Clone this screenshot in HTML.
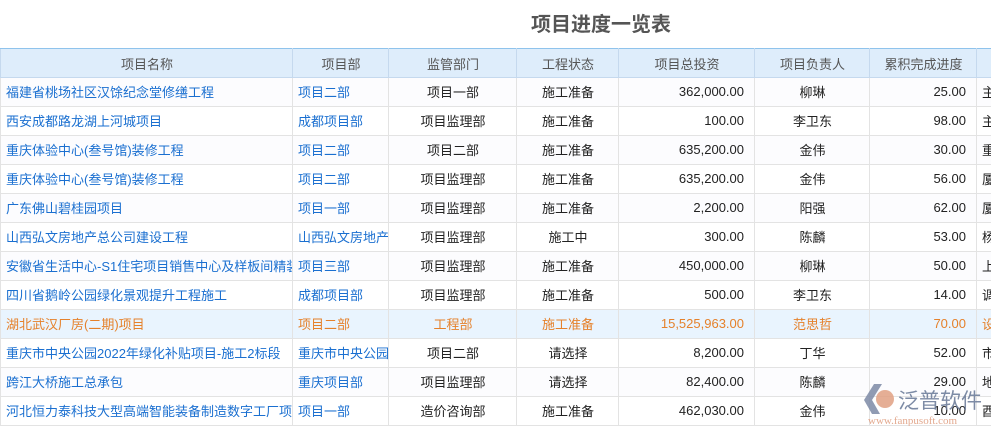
<!DOCTYPE html>
<html><head><meta charset="utf-8"><style>
body{margin:0;width:991px;height:427px;overflow:hidden;background:#fff;font-family:"Liberation Sans","Noto Sans CJK SC",sans-serif;position:relative}
.title{position:absolute;left:0;width:1202px;top:8px;text-align:center;font-size:20px;font-weight:bold;color:#555;font-family:"Noto Sans CJK SC",sans-serif}
table{position:absolute;left:0;top:48px;width:1016px;border-collapse:collapse;table-layout:fixed;font-size:13px;font-family:"Liberation Sans","Noto Sans CJK SC",sans-serif}
td,th{height:26px;border:1px solid #e3e3e3;padding:0 4px 2px 5px;white-space:nowrap;overflow:hidden;text-overflow:clip;color:#222}
th{height:28px;background:#deedfb;color:#555;font-weight:normal;border-color:#c5d9ee;border-top:1px solid #8fc3ec;padding-bottom:0}
td.l{color:#1a6fd0}
td.c{text-align:center}
td.r{text-align:right;padding-right:10px}
tr:nth-child(even) td{background:#fcfcfe}
tr.h td{background:#e9f4fe;color:#e5812b}
.wm{position:absolute;left:860px;top:378px}
</style></head><body>
<div class="title">项目进度一览表</div>
<table>
<colgroup><col style="width:292px"><col style="width:96px"><col style="width:128px"><col style="width:102px"><col style="width:136px"><col style="width:115px"><col style="width:107px"><col style="width:40px"></colgroup>
<tr><th>项目名称</th><th>项目部</th><th>监管部门</th><th>工程状态</th><th>项目总投资</th><th>项目负责人</th><th>累积完成进度</th><th></th></tr>
<tr><td class="l">福建省桃场社区汉馀纪念堂修缮工程</td><td class="l">项目二部</td><td class="c">项目一部</td><td class="c">施工准备</td><td class="r">362,000.00</td><td class="c">柳琳</td><td class="r">25.00</td><td>主</td></tr>
<tr><td class="l">西安成都路龙湖上河城项目</td><td class="l">成都项目部</td><td class="c">项目监理部</td><td class="c">施工准备</td><td class="r">100.00</td><td class="c">李卫东</td><td class="r">98.00</td><td>主</td></tr>
<tr><td class="l">重庆体验中心(叁号馆)装修工程</td><td class="l">项目二部</td><td class="c">项目二部</td><td class="c">施工准备</td><td class="r">635,200.00</td><td class="c">金伟</td><td class="r">30.00</td><td>重</td></tr>
<tr><td class="l">重庆体验中心(叁号馆)装修工程</td><td class="l">项目二部</td><td class="c">项目监理部</td><td class="c">施工准备</td><td class="r">635,200.00</td><td class="c">金伟</td><td class="r">56.00</td><td>厦</td></tr>
<tr><td class="l">广东佛山碧桂园项目</td><td class="l">项目一部</td><td class="c">项目监理部</td><td class="c">施工准备</td><td class="r">2,200.00</td><td class="c">阳强</td><td class="r">62.00</td><td>厦</td></tr>
<tr><td class="l">山西弘文房地产总公司建设工程</td><td class="l">山西弘文房地产</td><td class="c">项目监理部</td><td class="c">施工中</td><td class="r">300.00</td><td class="c">陈麟</td><td class="r">53.00</td><td>杨</td></tr>
<tr><td class="l">安徽省生活中心-S1住宅项目销售中心及样板间精装</td><td class="l">项目三部</td><td class="c">项目监理部</td><td class="c">施工准备</td><td class="r">450,000.00</td><td class="c">柳琳</td><td class="r">50.00</td><td>上</td></tr>
<tr><td class="l">四川省鹅岭公园绿化景观提升工程施工</td><td class="l">成都项目部</td><td class="c">项目监理部</td><td class="c">施工准备</td><td class="r">500.00</td><td class="c">李卫东</td><td class="r">14.00</td><td>调</td></tr>
<tr class="h"><td>湖北武汉厂房(二期)项目</td><td>项目二部</td><td class="c">工程部</td><td class="c">施工准备</td><td class="r">15,525,963.00</td><td class="c">范思哲</td><td class="r">70.00</td><td>设</td></tr>
<tr><td class="l">重庆市中央公园2022年绿化补贴项目-施工2标段</td><td class="l">重庆市中央公园</td><td class="c">项目二部</td><td class="c">请选择</td><td class="r">8,200.00</td><td class="c">丁华</td><td class="r">52.00</td><td>市</td></tr>
<tr><td class="l">跨江大桥施工总承包</td><td class="l">重庆项目部</td><td class="c">项目监理部</td><td class="c">请选择</td><td class="r">82,400.00</td><td class="c">陈麟</td><td class="r">29.00</td><td>地</td></tr>
<tr><td class="l">河北恒力泰科技大型高端智能装备制造数字工厂项目</td><td class="l">项目一部</td><td class="c">造价咨询部</td><td class="c">施工准备</td><td class="r">462,030.00</td><td class="c">金伟</td><td class="r">10.00</td><td>酉</td></tr>
</table>
<div class="wm">
<svg width="130" height="48" style="position:absolute;left:0;top:0">
<path d="M4 22 L14 6 L22 6 L12 22 L20 36 L12 36 Z" fill="#7c89a6" opacity="0.85"/>
<circle cx="25" cy="21" r="9" fill="#e0a083" opacity="0.85"/>
<text x="38" y="30" font-size="21" fill="#6f7f9c" font-family="Noto Sans CJK SC,sans-serif" opacity="0.9">泛普软件</text>
<text x="8" y="46" font-size="11" fill="#e0a083" font-family="Liberation Serif,serif" opacity="0.9">www.fanpusoft.com</text>
</svg></div>
</body></html>
